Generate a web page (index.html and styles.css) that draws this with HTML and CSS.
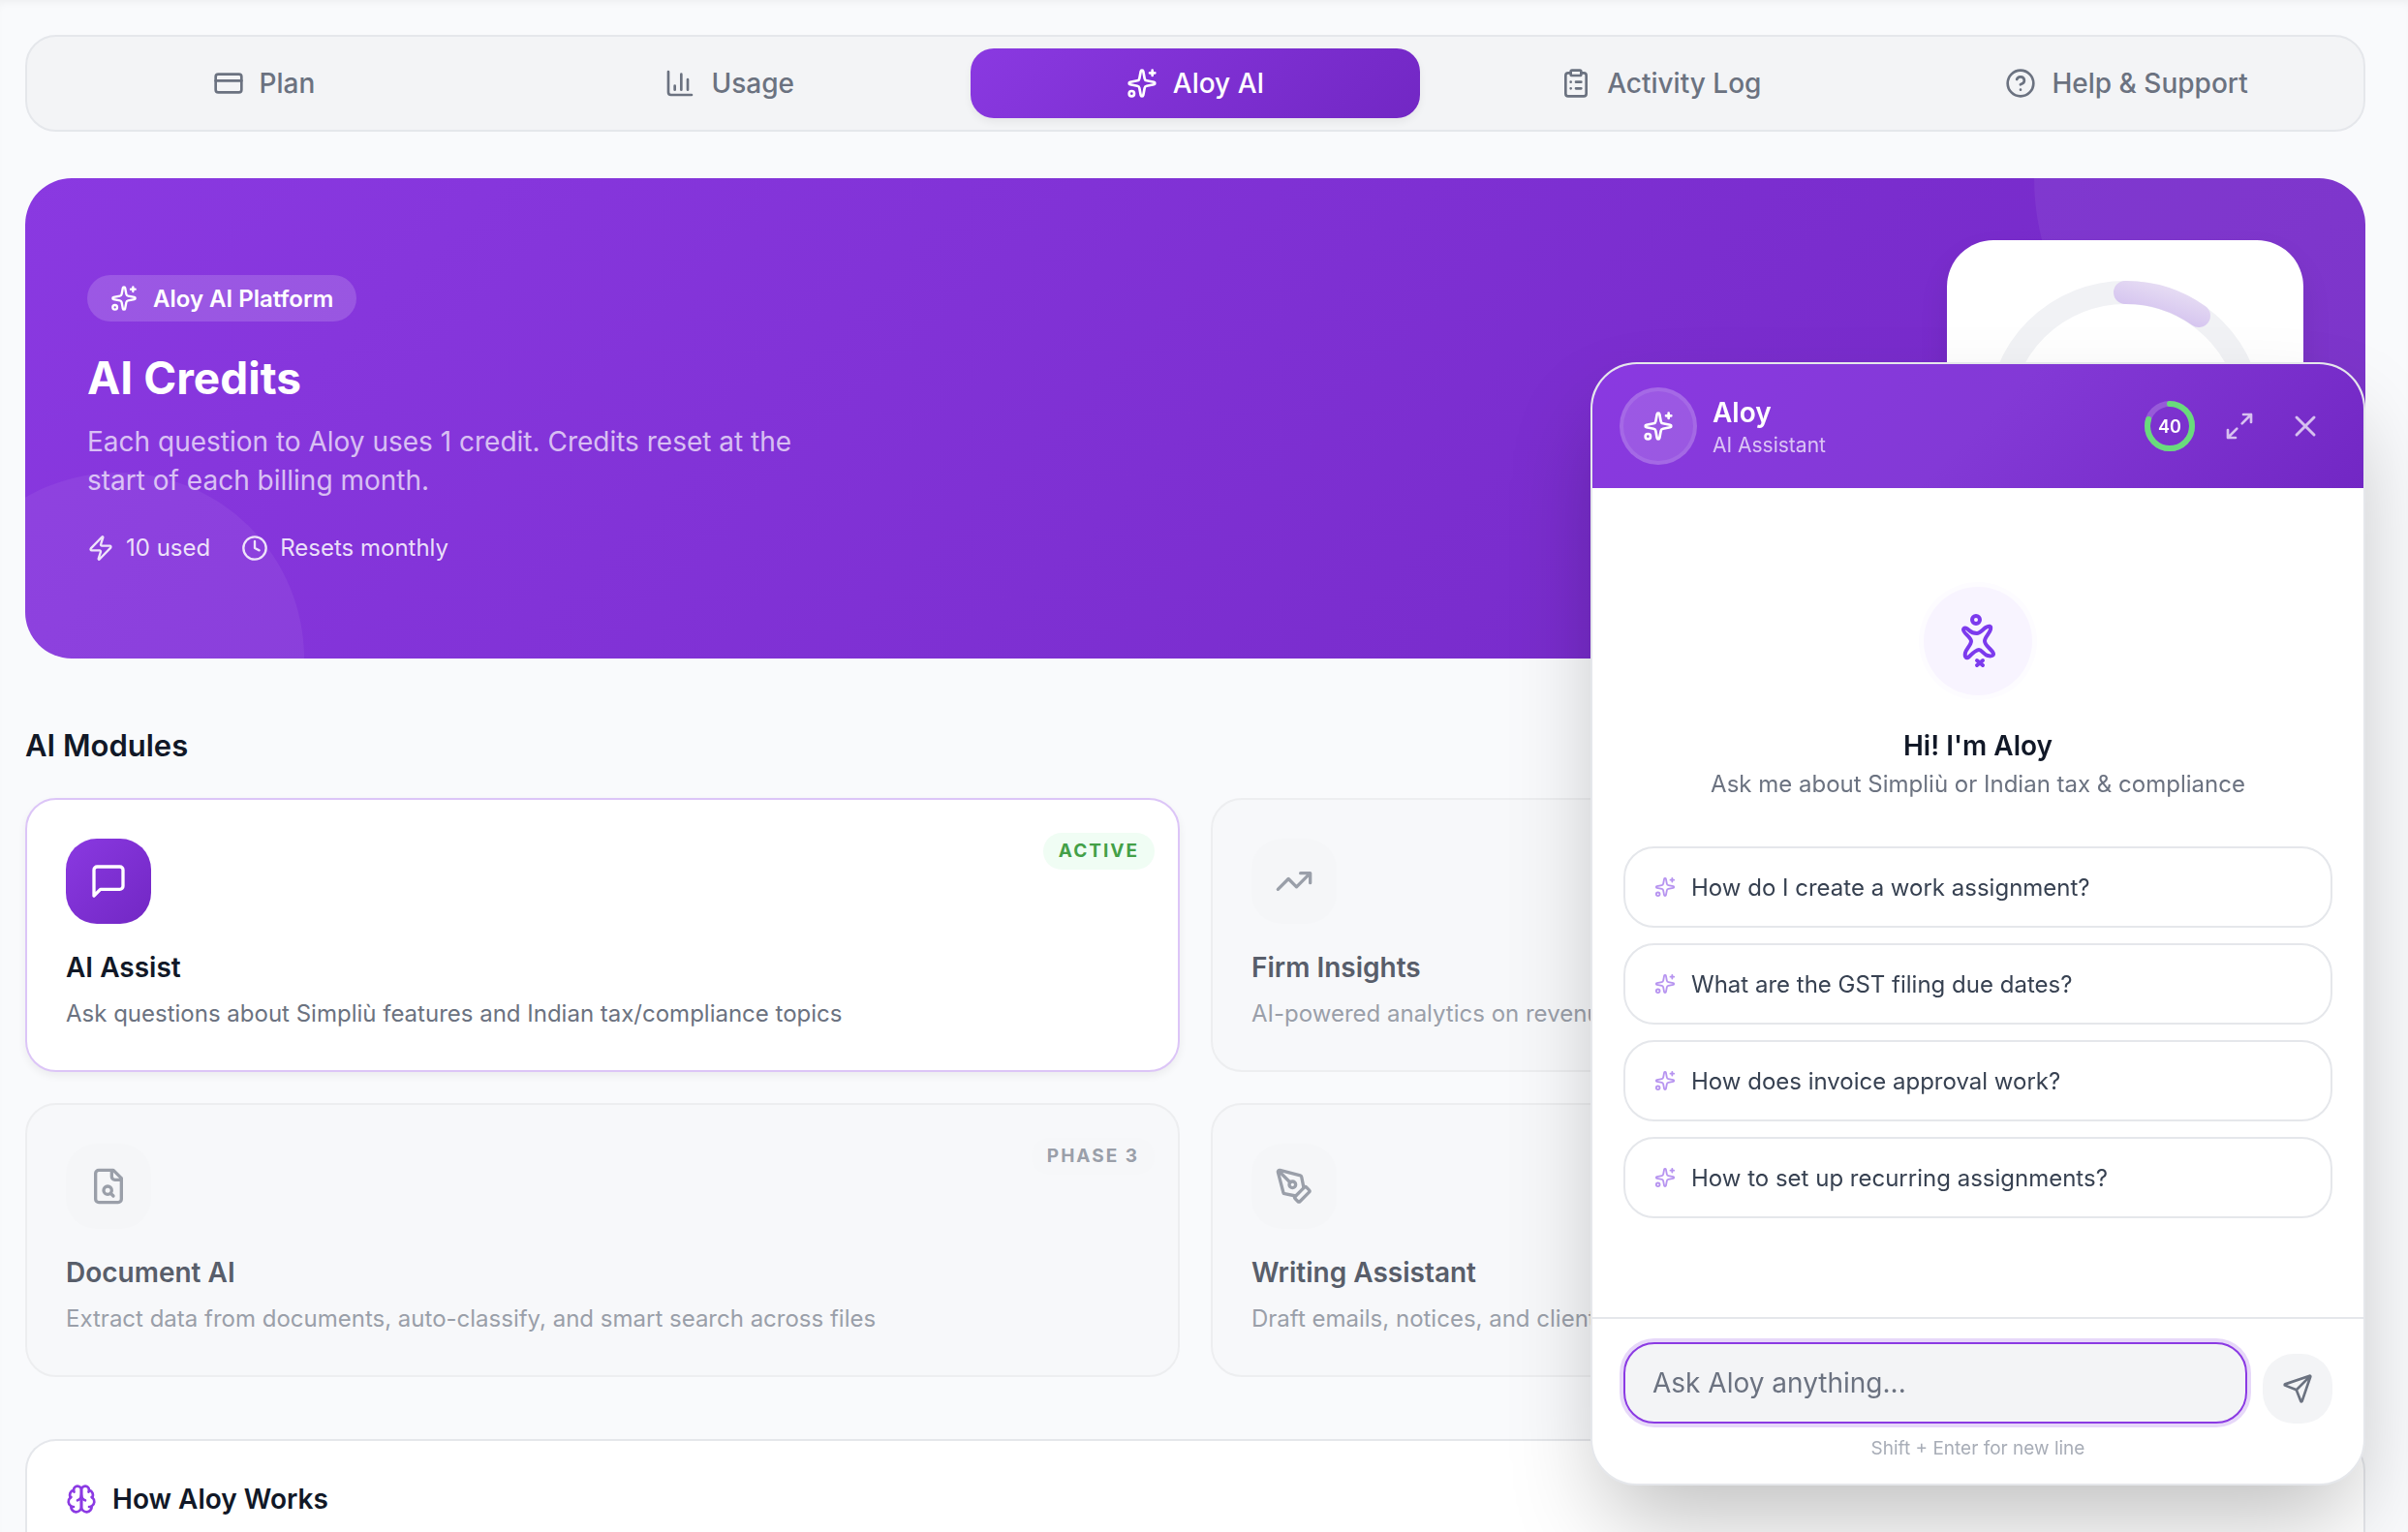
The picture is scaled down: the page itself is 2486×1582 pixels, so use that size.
FILE: index.html
```html
<!DOCTYPE html>
<html lang="en">
<head>
    <meta charset="UTF-8">
    <meta name="viewport" content="width=device-width, initial-scale=1.0">
    <title>Aloy AI</title>
    <link rel="stylesheet" href="styles.css">
</head>
<body>
    <!-- Shared icons -->
    <svg class="sprite" aria-hidden="true">
        <symbol id="sparkles" viewBox="0 0 24 24">
            <path d="M11.017 2.814a1 1 0 0 1 1.966 0l1.051 5.558a2 2 0 0 0 1.594 1.594l5.558 1.051a1 1 0 0 1 0 1.966l-5.558 1.051a2 2 0 0 0-1.594 1.594l-1.051 5.558a1 1 0 0 1-1.966 0l-1.051-5.558a2 2 0 0 0-1.594-1.594l-5.558-1.051a1 1 0 0 1 0-1.966l5.558-1.051a2 2 0 0 0 1.594-1.594z"/>
            <path d="M20 2v4M22 4h-4"/>
            <circle cx="4" cy="20" r="2"/>
        </symbol>
    </svg>

    <main class="page">
        <nav class="tabs">
            <button class="tab" type="button">
                <svg class="icon icon-tab" viewBox="0 0 24 24"><rect x="2" y="5" width="20" height="14" rx="2"/><path d="M2 10h20"/></svg>
                Plan
            </button>
            <button class="tab" type="button">
                <svg class="icon icon-tab" viewBox="0 0 24 24"><path d="M3 3v16a2 2 0 0 0 2 2h16M18 17V9M13 17V5M8 17v-3"/></svg>
                Usage
            </button>
            <button class="tab active" type="button">
                <svg class="icon icon-tab"><use href="#sparkles"/></svg>
                Aloy AI
            </button>
            <button class="tab" type="button">
                <svg class="icon icon-tab" viewBox="0 0 24 24"><rect x="8" y="2" width="8" height="4" rx="1"/><path d="M16 4h2a2 2 0 0 1 2 2v14a2 2 0 0 1-2 2H6a2 2 0 0 1-2-2V6a2 2 0 0 1 2-2h2M12 11h4M12 16h4M8 11h.01M8 16h.01"/></svg>
                Activity Log
            </button>
            <button class="tab" type="button">
                <svg class="icon icon-tab" viewBox="0 0 24 24"><circle cx="12" cy="12" r="10"/><path d="M9.09 9a3 3 0 0 1 5.83 1c0 2-3 3-3 3M12 17h.01"/></svg>
                Help &amp; Support
            </button>
        </nav>

        <section class="hero">
            <div class="hero-text">
                <span class="hero-pill">
                    <svg class="icon icon-sm"><use href="#sparkles"/></svg>
                    Aloy AI Platform
                </span>
                <h1>AI Credits</h1>
                <p class="hero-desc">Each question to Aloy uses 1 credit. Credits reset at the start of each billing month.</p>
                <div class="hero-stats">
                    <span class="stat">
                        <svg class="icon icon-sm" viewBox="0 0 24 24"><path d="M4 14a1 1 0 0 1-.78-1.63l9.9-10.2a.5.5 0 0 1 .86.46l-1.92 6.02A1 1 0 0 0 13 10h7a1 1 0 0 1 .78 1.63l-9.9 10.2a.5.5 0 0 1-.86-.46l1.92-6.02A1 1 0 0 0 11 14z"/></svg>
                        10 used
                    </span>
                    <span class="stat">
                        <svg class="icon icon-sm" viewBox="0 0 24 24"><circle cx="12" cy="12" r="10"/><path d="M12 6v6l4 2"/></svg>
                        Resets monthly
                    </span>
                </div>
            </div>
            <div class="credit-card">
                <svg class="credit-ring" viewBox="0 0 288 288">
                    <defs>
                        <linearGradient id="ring" x1="0" y1="1" x2="1" y2="0">
                            <stop offset="0" stop-color="#d0bdee"/>
                            <stop offset="1" stop-color="#e8dff4"/>
                        </linearGradient>
                    </defs>
                    <circle class="ring-track" cx="144" cy="144" r="130"/>
                    <path class="ring-value" stroke="url(#ring)" d="M144 14A130 130 0 0 1 220 38"/>
                </svg>
            </div>
        </section>

        <h2>AI Modules</h2>
        <div class="modules">
            <article class="module live">
                <span class="badge">ACTIVE</span>
                <div class="module-icon">
                    <svg class="icon icon-lg" viewBox="0 0 24 24"><path d="M21 15a2 2 0 0 1-2 2H7l-4 4V5a2 2 0 0 1 2-2h14a2 2 0 0 1 2 2z"/></svg>
                </div>
                <h3>AI Assist</h3>
                <p>Ask questions about Simpliù features and Indian tax/compliance topics</p>
            </article>
            <article class="module">
                <div class="module-icon">
                    <svg class="icon icon-lg" viewBox="0 0 24 24"><path d="M16 7h6v6M22 7l-8.500 8.500-5-5L2 17"/></svg>
                </div>
                <h3>Firm Insights</h3>
                <p>AI-powered analytics on revenue, clients and team workload</p>
            </article>
            <article class="module">
                <span class="badge">PHASE 3</span>
                <div class="module-icon">
                    <svg class="icon icon-lg" viewBox="0 0 24 24"><path d="M14 2v4a2 2 0 0 0 2 2h4M15 2H6a2 2 0 0 0-2 2v16a2 2 0 0 0 2 2h12a2 2 0 0 0 2-2V7z"/><circle cx="11.500" cy="14.500" r="2.500"/><path d="M13.300 16.300 15 18"/></svg>
                </div>
                <h3>Document AI</h3>
                <p>Extract data from documents, auto-classify, and smart search across files</p>
            </article>
            <article class="module">
                <div class="module-icon">
                    <svg class="icon icon-lg" viewBox="0 0 24 24"><path d="M15.707 21.293a1 1 0 0 1-1.414 0l-1.586-1.586a1 1 0 0 1 0-1.414l5.586-5.586a1 1 0 0 1 1.414 0l1.586 1.586a1 1 0 0 1 0 1.414z"/><path d="m18 13-1.375-6.874a1 1 0 0 0-.746-.776L3.235 2.028a1 1 0 0 0-1.207 1.207L5.350 15.879a1 1 0 0 0 .776.746L13 18M2.300 2.300l7.286 7.286"/><circle cx="11" cy="11" r="2"/></svg>
                </div>
                <h3>Writing Assistant</h3>
                <p>Draft emails, notices, and client communications</p>
            </article>
        </div>

        <section class="how">
            <h3>
                <svg class="icon icon-brain" viewBox="0 0 24 24"><path d="M12 5a3 3 0 1 0-5.997.125 4 4 0 0 0-2.526 5.770 4 4 0 0 0 .556 6.588A4 4 0 1 0 12 18Z"/><path d="M12 5a3 3 0 1 1 5.997.125 4 4 0 0 1 2.526 5.770 4 4 0 0 1-.556 6.588A4 4 0 1 1 12 18Z"/><path d="M15 13a4.500 4.500 0 0 1-3-4 4.500 4.500 0 0 1-3 4M17.599 6.500a3 3 0 0 0 .399-1.375M6.003 5.125A3 3 0 0 0 6.401 6.500M3.477 10.896a4 4 0 0 1 .585-.396M19.938 10.500a4 4 0 0 1 .585.396M6 18a4 4 0 0 1-1.967-.516M19.967 17.484A4 4 0 0 1 18 18"/></svg>
                How Aloy Works
            </h3>
        </section>
    </main>

    <aside class="chat">
        <header class="chat-header">
            <div class="avatar">
                <svg class="icon icon-avatar"><use href="#sparkles"/></svg>
            </div>
            <div class="chat-name">
                <strong>Aloy</strong>
                <span>AI Assistant</span>
            </div>
            <div class="credits-left">
                <svg viewBox="0 0 56 56">
                    <circle class="left-track" cx="28" cy="28" r="23"/>
                    <circle class="left-value" cx="28" cy="28" r="23" pathLength="100"/>
                </svg>
                <span>40</span>
            </div>
            <button class="chat-action" type="button" aria-label="Expand">
                <svg class="icon icon-md" viewBox="0 0 24 24"><path d="M15 3h6v6M21 3l-7 7M3 21l7-7M9 21H3v-6"/></svg>
            </button>
            <button class="chat-action" type="button" aria-label="Close">
                <svg class="icon icon-close" viewBox="0 0 24 24"><path d="M18 6 6 18M6 6l12 12"/></svg>
            </button>
        </header>

        <div class="chat-body">
            <div class="mascot">
                <svg viewBox="0 0 56 56">
                    <circle cx="26" cy="6" r="4"/>
                    <path d="M13 16C14 13 17 15 19 17S24 20 27 20S33 16 36 14S42 12 41 16S35 24 35 28S40 35 43 39S42 44 38 43S32 37 29 37S22 41 19 44S14 44 15 40S21 32 21 28S12 19 13 16Z"/>
                    <path d="m27 48 6 5M33 48l-6 5"/>
                </svg>
            </div>
            <h2>Hi! I'm Aloy</h2>
            <p>Ask me about Simpliù or Indian tax &amp; compliance</p>
            <div class="suggestions">
                <button type="button"><svg class="icon icon-xs"><use href="#sparkles"/></svg>How do I create a work assignment?</button>
                <button type="button"><svg class="icon icon-xs"><use href="#sparkles"/></svg>What are the GST filing due dates?</button>
                <button type="button"><svg class="icon icon-xs"><use href="#sparkles"/></svg>How does invoice approval work?</button>
                <button type="button"><svg class="icon icon-xs"><use href="#sparkles"/></svg>How to set up recurring assignments?</button>
            </div>
        </div>

        <footer class="chat-footer">
            <form class="composer">
                <textarea rows="1" placeholder="Ask Aloy anything..." aria-label="Ask Aloy anything"></textarea>
                <button class="send" type="button" aria-label="Send">
                    <svg class="icon icon-send" viewBox="0 0 24 24"><path d="M14.536 21.686a.5.5 0 0 0 .937-.024l6.500-19a.496.496 0 0 0-.635-.635l-19 6.500a.5.5 0 0 0-.024.937l7.930 3.180a2 2 0 0 1 1.112 1.110zM21.854 2.147l-10.940 10.939"/></svg>
                </button>
            </form>
            <p class="hint">Shift + Enter for new line</p>
        </footer>
    </aside>
</body>
</html>
```
FILE: styles.css
```css
* {
    box-sizing: border-box;
    margin: 0;
}
body {
    height: 100vh;
    overflow: hidden;
    background: #f9fafc;
    box-shadow: inset 0 6px 8px -4px rgba(0, 0, 0, 0.05);
    color: #111827;
    font-family: Inter, "Liberation Sans", sans-serif;
    font-size: 24px;
}
button, textarea {
    font: inherit;
    color: inherit;
    border: none;
    background: none;
}
button {
    cursor: pointer;
}
.sprite {
    position: absolute;
    width: 0;
    height: 0;
}
.icon {
    flex: none;
    fill: none;
    stroke: currentColor;
    stroke-width: 2;
    stroke-linecap: round;
    stroke-linejoin: round;
}
.icon-xs {
    width: 22px;
    height: 22px;
    color: #b794f0;
}
.icon-sm {
    width: 28px;
    height: 28px;
}
.icon-md {
    width: 32px;
    height: 32px;
}
.icon-tab, .icon-avatar, .icon-brain, .icon-send {
    width: 32px;
    height: 32px;
}
.icon-close {
    width: 36px;
    height: 36px;
}
.icon-lg {
    width: 40px;
    height: 40px;
}
.page {
    display: flex;
    flex-direction: column;
    height: 100%;
    padding: 36px 44px 0 26px;
}

/* Tabs */
.tabs {
    display: grid;
    grid-template-columns: repeat(5, 1fr);
    gap: 16px;
    padding: 12px;
    border: 2px solid #e5e7eb;
    border-radius: 32px;
    background: #f3f4f6;
}
.tab {
    display: flex;
    align-items: center;
    justify-content: center;
    gap: 16px;
    height: 72px;
    border-radius: 24px;
    color: #6b7280;
    font-size: 28px;
    font-weight: 500;
}
.tab.active {
    background: linear-gradient(135deg, #8a39e1, #7227c4);
    box-shadow: 0 4px 8px rgba(0, 0, 0, 0.06);
    color: #fff;
}

/* Credits banner */
.hero {
    position: relative;
    display: flex;
    flex: none;
    align-items: center;
    justify-content: space-between;
    margin-top: 48px;
    padding: 64px;
    border-radius: 48px;
    background: linear-gradient(135deg, #8a39e1, #7227c4);
    color: #fff;
    overflow: hidden;
}
.hero::before, .hero::after {
    content: "";
    position: absolute;
    border-radius: 50%;
    background: rgba(255, 255, 255, 0.06);
}
.hero::before {
    width: 384px;
    height: 384px;
    left: -96px;
    bottom: -192px;
}
.hero::after {
    width: 512px;
    height: 512px;
    right: -170px;
    top: -256px;
}
.hero-text, .credit-card {
    position: relative;
    z-index: 1;
}
.hero-text {
    max-width: 768px;
    padding-top: 4px;
}
.hero-pill {
    display: inline-flex;
    align-items: center;
    gap: 16px;
    height: 48px;
    padding: 0 24px;
    border-radius: 24px;
    background: rgba(255, 255, 255, 0.16);
    font-weight: 600;
}
.hero h1 {
    margin-top: 28px;
    font-size: 46px;
    line-height: 60px;
}
.hero-desc {
    margin-top: 16px;
    color: rgba(255, 255, 255, 0.7);
    font-size: 28px;
    line-height: 40px;
}
.hero-stats {
    display: flex;
    gap: 32px;
    margin-top: 32px;
    color: rgba(255, 255, 255, 0.85);
    line-height: 36px;
}
.stat {
    display: flex;
    align-items: center;
    gap: 12px;
}
.credit-card {
    padding: 40px;
    border-radius: 48px;
    background: #fff;
    box-shadow: 0 16px 32px rgba(0, 0, 0, 0.08);
}
.credit-ring {
    display: block;
    width: 288px;
    height: 288px;
    fill: none;
    stroke-width: 24;
    stroke-linecap: round;
}
.ring-track {
    stroke: #f1f2f5;
}

/* Modules */
.page > h2 {
    margin-top: 70px;
    font-size: 31px;
    font-weight: 600;
    line-height: 40px;
}
.modules {
    display: grid;
    grid-template-columns: 1fr 1fr;
    gap: 32px;
    margin-top: 34px;
}
.module {
    position: relative;
    padding: 40px;
    border: 2px solid #edeef0;
    border-radius: 32px;
    background: #f7f8fa;
    color: #585e6a;
}
.module-icon {
    display: flex;
    align-items: center;
    justify-content: center;
    width: 88px;
    height: 88px;
    border-radius: 32px;
    background: #f5f6f8;
    color: #9a9fa9;
}
.module h3 {
    margin-top: 24px;
    font-size: 28px;
    font-weight: 600;
    line-height: 42px;
}
.module p {
    margin-top: 8px;
    color: #9a9fa9;
    line-height: 37px;
    white-space: nowrap;
    overflow: hidden;
    text-overflow: ellipsis;
}
.badge {
    position: absolute;
    top: 34px;
    right: 24px;
    padding: 0 16px;
    border-radius: 20px;
    background: #f6f7f9;
    color: #9a9fa9;
    font-size: 19px;
    font-weight: 700;
    line-height: 38px;
    letter-spacing: 2px;
}
.module.live {
    border-color: #dcc5f7;
    background: #fff;
    box-shadow: 0 4px 8px rgba(0, 0, 0, 0.06);
    color: #111827;
}
.live .module-icon {
    background: linear-gradient(135deg, #8a39e1, #7227c4);
    color: #fff;
}
.live p {
    color: #6b7280;
}
.live .badge {
    background: #f0fdf4;
    color: #43a047;
}
.how {
    flex: 1;
    margin-top: 64px;
    padding: 40px 40px 0;
    border: 2px solid #e5e7eb;
    border-bottom: none;
    border-radius: 32px 32px 0 0;
    background: #fff;
}
.how h3 {
    display: flex;
    align-items: center;
    gap: 16px;
    font-size: 28px;
    font-weight: 600;
    line-height: 40px;
}
.icon-brain {
    color: #8b3ae3;
}

/* Chat window */
.chat {
    position: fixed;
    right: 44px;
    bottom: 48px;
    z-index: 10;
    display: flex;
    flex-direction: column;
    width: 800px;
    height: 1160px;
    border: 2px solid #e5e7eb;
    border-radius: 48px;
    background: #fff;
    box-shadow: 0 48px 96px -16px rgba(0, 0, 0, 0.26);
    overflow: hidden;
}
.chat-header {
    display: flex;
    align-items: center;
    height: 128px;
    padding: 0 28px;
    background: linear-gradient(135deg, #8a39e1, #8339d6 50%, #7227c4);
    color: #fff;
}
.avatar {
    display: flex;
    align-items: center;
    justify-content: center;
    width: 80px;
    height: 80px;
    border: 4px solid rgba(255, 255, 255, 0.1);
    border-radius: 50%;
    background: rgba(255, 255, 255, 0.16);
}
.chat-name {
    display: flex;
    flex: 1;
    flex-direction: column;
    margin-left: 16px;
}
.chat-name strong {
    font-size: 28px;
    font-weight: 600;
    line-height: 40px;
}
.chat-name span {
    color: rgba(255, 255, 255, 0.7);
    font-size: 21px;
    line-height: 28px;
}
.credits-left {
    display: grid;
    place-items: center;
    width: 56px;
    margin-right: 8px;
    font-size: 18px;
    font-weight: 600;
}
.credits-left > * {
    grid-area: 1 / 1;
}
.credits-left svg {
    width: 56px;
    height: 56px;
    fill: none;
    stroke-width: 6;
    transform: rotate(-90deg);
}
.left-track {
    stroke: rgba(255, 255, 255, 0.2);
}
.left-value {
    stroke: #69db7c;
    stroke-dasharray: 80 100;
    stroke-linecap: round;
}
.chat-action {
    display: flex;
    align-items: center;
    justify-content: center;
    width: 64px;
    height: 64px;
    margin-left: 4px;
    padding: 0;
    color: rgba(255, 255, 255, 0.7);
}
.chat-body {
    display: flex;
    flex: 1;
    flex-direction: column;
    align-items: center;
    justify-content: center;
    padding: 0 32px;
}
.mascot {
    display: flex;
    align-items: center;
    justify-content: center;
    width: 112px;
    height: 112px;
    border-radius: 50%;
    background: #f8f4ff;
    box-shadow: 0 0 0 5px #fdfcff;
}
.mascot svg {
    width: 56px;
    height: 56px;
    fill: none;
    stroke: #7c3aed;
    stroke-width: 4;
    stroke-linecap: round;
    stroke-linejoin: round;
}
.chat-body h2 {
    margin-top: 32px;
    font-size: 28px;
    font-weight: 600;
    line-height: 40px;
}
.chat-body p {
    margin-top: 2px;
    color: #6b7280;
    line-height: 36px;
}
.suggestions {
    display: flex;
    flex-direction: column;
    gap: 16px;
    width: 100%;
    margin-top: 46px;
}
.suggestions button {
    display: flex;
    align-items: center;
    gap: 16px;
    height: 84px;
    padding: 0 30px;
    border: 2px solid #e5e7eb;
    border-radius: 32px;
    color: #374151;
}
.chat-footer {
    padding: 24px 32px 22px;
    border-top: 2px solid #e5e7eb;
}
.composer {
    display: flex;
    align-items: flex-end;
    gap: 16px;
}
.composer textarea {
    flex: 1;
    height: 84px;
    padding: 20px 28px;
    border: 2px solid #8b3ae3;
    border-radius: 32px;
    background: #f3f4f6;
    box-shadow: 0 0 0 4px #e7d8f9;
    font-size: 28px;
    line-height: 40px;
    outline: none;
    resize: none;
}
.composer textarea::placeholder {
    color: #6b7280;
}
.send {
    display: flex;
    align-items: center;
    justify-content: center;
    width: 72px;
    height: 72px;
    padding: 0;
    border-radius: 32px;
    background: #f3f4f6;
    color: #6b7280;
}
.hint {
    margin-top: 12px;
    color: #a8adb7;
    font-size: 19px;
    line-height: 28px;
    text-align: center;
}
```
